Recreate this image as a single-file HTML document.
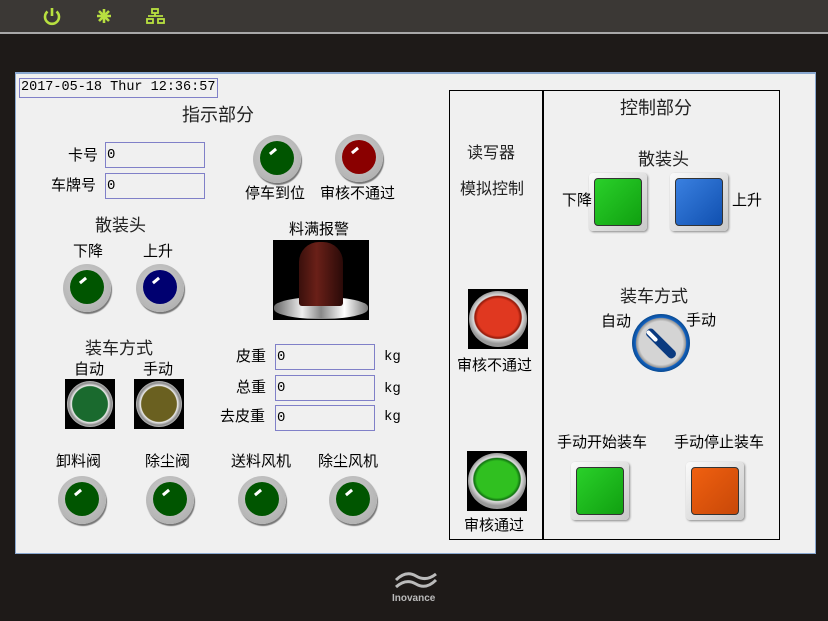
<!DOCTYPE html>
<html><head><meta charset="utf-8"><style>
*{margin:0;padding:0;box-sizing:border-box}
body{width:828px;height:621px;background:#1e1a18;position:relative;overflow:hidden;font-family:"Liberation Sans","Noto Sans CJK SC",sans-serif;color:#000}
.a{position:absolute}
.t{position:absolute;font-size:15px;white-space:nowrap;line-height:1}
.h{font-size:18px;color:#222}
.in{position:absolute;border:1px solid #8080c8;background:#f0f0f0;font-family:"Liberation Mono",monospace;font-size:14px;padding:5px 1px;line-height:1;white-space:nowrap;overflow:hidden}
.lamp{position:absolute;width:48px;height:48px;border-radius:50%;background:radial-gradient(circle at 45% 40%,#d0d0d0,#a8a8a8);box-shadow:1px 2px 1px #777}
.lamp i{position:absolute;left:7px;top:6px;width:34px;height:34px;border-radius:50%}
.lamp b{position:absolute;left:16px;top:15px;width:8px;height:3px;background:#fff;transform:rotate(-40deg)}
.sq{position:absolute;width:58px;height:58px;border-radius:4px;background:linear-gradient(135deg,#fafafa,#c8c8c8);box-shadow:1px 1px 2px #888}
.sq i{position:absolute;left:5px;top:5px;width:48px;height:48px;border-radius:4px;border:1px solid #333}
.blk{position:absolute;background:#000}
</style></head><body>
<div class="a" style="left:0;top:0;width:828px;height:32px;background:#3b3835"></div>
<div class="a" style="left:0;top:32px;width:828px;height:2px;background:#a8a8a8"></div>
<svg class="a" style="left:42px;top:7px" width="130" height="20">
<g stroke="#b8e040" stroke-width="2.6" fill="none"><path d="M5.5 4.5A7 7 0 1 0 14.5 4.5"/><path d="M10 1v8"/>
<path d="M62 2v14M55 9h14M57 4l10 10M67 4l-10 10"/></g>
<g fill="none" stroke="#b8e040" stroke-width="1.8"><rect x="110" y="2" width="6" height="4"/><rect x="105" y="12" width="6" height="4"/><rect x="116" y="12" width="6" height="4"/><path d="M113 6v3M106 9h15"/></g>
</svg>
<div class="a" style="left:15px;top:72px;width:801px;height:482px;background:#f0f0f0;border:1px solid #8aa8d0;border-top:2px solid #8aa8d0"></div>
<div class="in" style="left:19px;top:78px;width:199px;height:20px;font-size:13.5px;padding:2px 1px">2017-05-18 Thur 12:36:57</div>
<div class="t h" style="left:182px;top:106px">指示部分</div>
<div class="t" style="left:68px;top:148px">卡号</div>
<div class="in" style="left:105px;top:142px;width:100px;height:26px">0</div>
<div class="t" style="left:51px;top:178px">车牌号</div>
<div class="in" style="left:105px;top:173px;width:100px;height:26px">0</div>
<div class="lamp" style="left:253px;top:135px"><i style="background:#005500"></i><b></b></div>
<div class="lamp" style="left:335px;top:134px"><i style="background:#8a0000"></i><b></b></div>
<div class="t" style="left:245px;top:186px">停车到位</div>
<div class="t" style="left:320px;top:186px">审核不通过</div>
<div class="t h" style="left:95px;top:217px;font-size:17px">散装头</div>
<div class="t" style="left:73px;top:244px">下降</div>
<div class="t" style="left:143px;top:244px">上升</div>
<div class="lamp" style="left:63px;top:264px"><i style="background:#005500"></i><b></b></div>
<div class="lamp" style="left:136px;top:264px"><i style="background:#000070"></i><b></b></div>
<div class="t" style="left:289px;top:222px">料满报警</div>
<div class="blk" style="left:273px;top:240px;width:96px;height:80px"></div>
<div class="a" style="left:274px;top:297px;width:94px;height:22px;border-radius:47px/10px;background:linear-gradient(90deg,#666,#eee 30%,#888 50%,#fff 75%,#777)"></div>
<div class="a" style="left:299px;top:242px;width:44px;height:64px;border-radius:20px 20px 3px 3px;background:linear-gradient(90deg,#3a100c,#6a2018 40%,#4a1510 70%,#2a0a08)"></div>
<div class="t h" style="left:85px;top:340px;font-size:17px">装车方式</div>
<div class="t" style="left:74px;top:362px">自动</div>
<div class="t" style="left:143px;top:362px">手动</div>
<div class="blk" style="left:65px;top:379px;width:50px;height:50px"></div>
<div class="a" style="left:67px;top:381px;width:46px;height:46px;border-radius:50%;background:radial-gradient(closest-side,#1a6a2e 76%,#eee 80%,#888 92%,#bbb)"></div>
<div class="blk" style="left:134px;top:379px;width:50px;height:50px"></div>
<div class="a" style="left:136px;top:381px;width:46px;height:46px;border-radius:50%;background:radial-gradient(closest-side,#6a6020 76%,#eee 80%,#888 92%,#bbb)"></div>
<div class="t" style="left:236px;top:349px">皮重</div>
<div class="in" style="left:275px;top:344px;width:100px;height:26px">0</div>
<div class="t" style="left:236px;top:380px">总重</div>
<div class="in" style="left:275px;top:375px;width:100px;height:26px">0</div>
<div class="t" style="left:220px;top:409px">去皮重</div>
<div class="in" style="left:275px;top:405px;width:100px;height:26px">0</div>
<div class="t" style="left:384px;top:350px;font-family:'Liberation Mono',monospace;font-size:14px">kg</div>
<div class="t" style="left:384px;top:382px;font-family:'Liberation Mono',monospace;font-size:14px">kg</div>
<div class="t" style="left:384px;top:410px;font-family:'Liberation Mono',monospace;font-size:14px">kg</div>
<div class="t" style="left:56px;top:454px">卸料阀</div>
<div class="t" style="left:145px;top:454px">除尘阀</div>
<div class="t" style="left:231px;top:454px">送料风机</div>
<div class="t" style="left:318px;top:454px">除尘风机</div>
<div class="lamp" style="left:58px;top:476px"><i style="background:#005500"></i><b></b></div>
<div class="lamp" style="left:146px;top:476px"><i style="background:#005500"></i><b></b></div>
<div class="lamp" style="left:238px;top:476px"><i style="background:#005500"></i><b></b></div>
<div class="lamp" style="left:329px;top:476px"><i style="background:#005500"></i><b></b></div>

<div class="a" style="left:449px;top:90px;width:331px;height:450px;border:1.5px solid #000"></div>
<div class="a" style="left:542px;top:90px;width:1.5px;height:450px;background:#000"></div>
<div class="t h" style="left:620px;top:99px">控制部分</div>
<div class="t" style="left:467px;top:146px;font-size:16px;color:#222">读写器</div>
<div class="t" style="left:460px;top:182px;font-size:16px;color:#222">模拟控制</div>
<div class="t h" style="left:638px;top:151px;font-size:17px">散装头</div>
<div class="sq" style="left:589px;top:173px"><i style="background:linear-gradient(135deg,#2ad02a,#10a010)"></i></div>
<div class="sq" style="left:670px;top:173px"><i style="background:linear-gradient(135deg,#3a80e0,#1050b0)"></i></div>
<div class="t" style="left:562px;top:193px">下降</div>
<div class="t" style="left:732px;top:193px">上升</div>
<div class="t h" style="left:620px;top:288px;font-size:17px">装车方式</div>
<div class="t" style="left:601px;top:314px">自动</div>
<div class="t" style="left:686px;top:313px">手动</div>
<div class="a" style="left:632px;top:314px;width:58px;height:58px;border-radius:50%;background:radial-gradient(closest-side,#d4d4d4 75%,#999 85%,#1060c0 88%,#0a4a90)"></div>
<div class="a" style="left:642px;top:339px;width:38px;height:9px;border-radius:4px;background:#0a3a80;transform:rotate(45deg)"></div>
<div class="a" style="left:645px;top:334px;width:14px;height:4px;border-radius:2px;background:#fff;transform:rotate(45deg)"></div>
<div class="blk" style="left:468px;top:289px;width:60px;height:60px"></div>
<div class="a" style="left:469px;top:291px;width:58px;height:56px;border-radius:50%;background:radial-gradient(closest-side at 50% 47%,#e03820 70%,#901808 80%,#ddd 84%,#999)"></div>
<div class="t" style="left:457px;top:358px">审核不通过</div>
<div class="blk" style="left:467px;top:451px;width:60px;height:60px"></div>
<div class="a" style="left:468px;top:453px;width:58px;height:56px;border-radius:50%;background:radial-gradient(closest-side at 50% 47%,#30c020 70%,#107010 80%,#ddd 84%,#999)"></div>
<div class="t" style="left:464px;top:518px">审核通过</div>
<div class="t" style="left:557px;top:435px">手动开始装车</div>
<div class="t" style="left:674px;top:435px">手动停止装车</div>
<div class="sq" style="left:571px;top:462px"><i style="background:linear-gradient(135deg,#2ad02a,#10a010)"></i></div>
<div class="sq" style="left:686px;top:462px"><i style="background:linear-gradient(135deg,#f06010,#c84808)"></i></div>
<svg class="a" style="left:390px;top:570px" width="50" height="24"><g fill="none" stroke="#bbb" stroke-width="3"><path d="M6 10Q16 0 26 6T46 4"/><path d="M6 17Q16 8 26 14T46 10"/></g></svg>
<div class="t" style="left:392px;top:594px;font-size:10px;font-weight:bold;color:#bbb">Inovance</div>
</body></html>
